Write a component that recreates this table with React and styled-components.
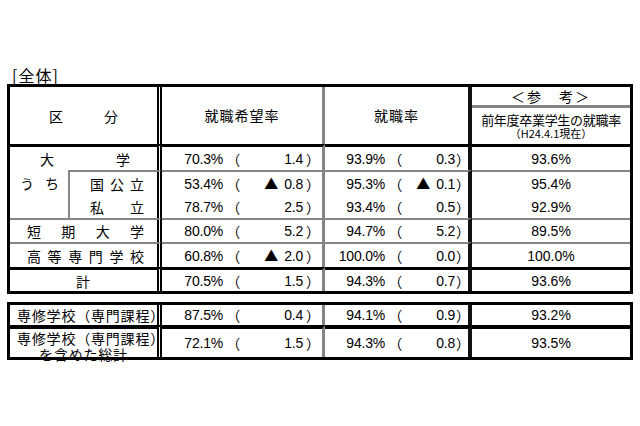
import styled, { createGlobalStyle } from "styled-components";

const GlobalStyle = createGlobalStyle`
  html, body {
    margin: 0;
    padding: 0;
    background: #fff;
  }
  body {
    font-family: "Liberation Sans", "Noto Sans CJK JP", sans-serif;
    color: #000;
  }
  * {
    box-sizing: border-box;
  }
`;

const GRAY = "#858585";

const tops = {
  none: "none",
  gray: `2px solid ${GRAY}`,
  gray3: `3px solid ${GRAY}`,
  black: "3px solid #000",
  heavy: "4px solid #000",
};

const rights = {
  none: "none",
  gray: `2px solid ${GRAY}`,
  gray3: `3px solid ${GRAY}`,
  dbl: "5px double #000",
  black: "4px solid #111",
};

const Page = styled.div`
  width: 640px;
  height: 426px;
  padding: 66px 0 0 7px;
  overflow: hidden;
`;

const Caption = styled.div`
  height: 18px;
  line-height: 18px;
  padding-left: 5px;
  font-family: "Noto Sans CJK JP", sans-serif;
  font-size: 16px;
  letter-spacing: 1px;
`;

const Table = styled.table`
  width: 626px;
  margin-top: ${(p) => p.$mt || 0}px;
  border: 3px solid #000;
  border-collapse: separate;
  border-spacing: 0;
  table-layout: fixed;
`;

const Col = styled.col`
  width: ${(p) => p.$w}px;
`;

const Row = styled.tr`
  height: ${(p) => p.$h}px;
`;

const Cell = styled.td`
  padding: ${(p) => p.$pt || 0}px 0 0;
  border-top: ${(p) => tops[p.$t || "none"]};
  border-right: ${(p) => rights[p.$r || "none"]};
  text-align: center;
  vertical-align: ${(p) => p.$va || "middle"};
  font-size: 14px;
  line-height: 16px;
  white-space: nowrap;
`;

const HeadText = styled.span`
  font-family: "Noto Sans CJK JP", sans-serif;
  font-size: 14px;
  letter-spacing: ${(p) => p.$ls ?? 1}px;
`;

const RefTitle = styled.div`
  font-family: "Noto Sans CJK JP", sans-serif;
  font-size: 14px;
  line-height: 16px;
  letter-spacing: 2px;
`;

const RefSub = styled.div`
  font-family: "Noto Sans CJK JP", sans-serif;
  font-size: ${(p) => p.$fs}px;
  line-height: ${(p) => p.$lh}px;
  letter-spacing: ${(p) => p.$ls}px;
`;

const Spread = styled.div`
  display: flex;
  justify-content: space-between;
  padding: 0 ${(p) => p.$pr}px 0 ${(p) => p.$pl}px;
  font-family: "Noto Sans CJK JP", sans-serif;
  font-size: 14px;
  line-height: 16px;
`;

const Stack = styled.div`
  height: 28px;
  padding-top: 1px;
  overflow: visible;
`;

const Label = styled.div`
  font-family: "Noto Sans CJK JP", sans-serif;
  font-size: 14px;
  line-height: ${(p) => p.$lh || 16}px;
  letter-spacing: 0.8px;
  text-align: ${(p) => p.$align || "left"};
  padding-left: ${(p) => p.$pl || 0}px;
`;

const Val = styled.div`
  display: grid;
  grid-template-columns: ${(p) => p.$cols};
  align-items: center;
  font-size: 14px;
  line-height: 16px;
  letter-spacing: -0.2px;
`;

const Pct = styled.span`
  text-align: right;
`;

const Paren = styled.span`
  font-family: "Noto Sans CJK JP", sans-serif;
  text-align: ${(p) => (p.$open ? "right" : "left")};
  padding-left: ${(p) => p.$pl || 0}px;
`;

const Num = styled.span`
  text-align: right;
`;

const Tri = styled.span`
  font-family: "Noto Sans CJK JP", sans-serif;
  font-size: 14px;
  margin-right: 6px;
`;

const C2 = { cols: "61px 17px 63px 19px", pl: 3 };
const C3 = { cols: "60px 17px 53px 13px", pl: 1 };

const Rate = ({ pct, diff, c }) => {
  const neg = diff.startsWith("▲");
  return (
    <Val $cols={c.cols}>
      <Pct>{pct}%</Pct>
      <Paren $open>（</Paren>
      <Num>
        {neg && <Tri>▲</Tri>}
        {neg ? diff.slice(1) : diff}
      </Num>
      <Paren $pl={c.pl}>）</Paren>
    </Val>
  );
};

const Chars = ({ text, pl, pr }) => (
  <Spread $pl={pl} $pr={pr}>
    {text.split("").map((ch, i) => (
      <span key={i}>{ch}</span>
    ))}
  </Spread>
);

const Values = ({ d, t }) => (
  <>
    <Cell $t={t} $r="gray3">
      <Rate pct={d[0]} diff={d[1]} c={C2} />
    </Cell>
    <Cell $t={t} $r="black">
      <Rate pct={d[2]} diff={d[3]} c={C3} />
    </Cell>
    <Cell $t={t}>{d[4]}%</Cell>
  </>
);

const App = () => (
  <Page>
    <GlobalStyle />
    <Caption>[全体]</Caption>
    <Table>
      <colgroup>
        <Col $w={60} />
        <Col $w={92} />
        <Col $w={163} />
        <Col $w={147} />
        <Col $w={158} />
      </colgroup>
      <tbody>
        <Row $h={18}>
          <Cell rowSpan={2} colSpan={2} $r="dbl">
            <Chars text="区分" pl={39} pr={39} />
          </Cell>
          <Cell rowSpan={2} $r="gray3">
            <HeadText>就職希望率</HeadText>
          </Cell>
          <Cell rowSpan={2} $r="black">
            <HeadText>就職率</HeadText>
          </Cell>
          <Cell>
            <RefTitle>＜参　考＞</RefTitle>
          </Cell>
        </Row>
        <Row $h={39}>
          <Cell $t="gray3">
            <RefSub $fs={13} $lh={15} $ls={-0.3}>前年度卒業学生の就職率</RefSub>
            <RefSub $fs={11} $lh={13} $ls={0}>（H24.4.1現在）</RefSub>
          </Cell>
        </Row>

        <Row $h={26}>
          <Cell colSpan={2} $t="black" $r="dbl">
            <Chars text="大学" pl={30} pr={27} />
          </Cell>
          <Values t="black" d={["70.3", "1.4", "93.9", "0.3", "93.6"]} />
        </Row>
        <Row $h={25}>
          <Cell rowSpan={2} $r="gray" $va="top" $pt={5}>
            <Chars text="うち" pl={10} pr={9} />
          </Cell>
          <Cell $t="gray" $r="dbl">
            <Chars text="国公立" pl={20} pr={13} />
          </Cell>
          <Values t="gray" d={["53.4", "▲0.8", "95.3", "▲0.1", "95.4"]} />
        </Row>
        <Row $h={23}>
          <Cell $r="dbl">
            <Chars text="私立" pl={20} pr={13} />
          </Cell>
          <Values d={["78.7", "2.5", "93.4", "0.5", "92.9"]} />
        </Row>
        <Row $h={24}>
          <Cell colSpan={2} $t="gray" $r="dbl">
            <Chars text="短期大学" pl={17} pr={13} />
          </Cell>
          <Values t="gray" d={["80.0", "5.2", "94.7", "5.2", "89.5"]} />
        </Row>
        <Row $h={25}>
          <Cell colSpan={2} $t="gray" $r="dbl">
            <Chars text="高等専門学校" pl={17} pr={13} />
          </Cell>
          <Values t="gray" d={["60.8", "▲2.0", "100.0", "0.0", "100.0"]} />
        </Row>
        <Row $h={24}>
          <Cell colSpan={2} $t="black" $r="dbl">
            <Label $align="center">計</Label>
          </Cell>
          <Values t="black" d={["70.5", "1.5", "94.3", "0.7", "93.6"]} />
        </Row>
      </tbody>
    </Table>

    <Table $mt={8}>
      <colgroup>
        <Col $w={152} />
        <Col $w={163} />
        <Col $w={147} />
        <Col $w={158} />
      </colgroup>
      <tbody>
        <Row $h={20}>
          <Cell $r="dbl">
            <Label $pl={7}>専修学校（専門課程）</Label>
          </Cell>
          <Values d={["87.5", "0.4", "94.1", "0.9", "93.2"]} />
        </Row>
        <Row $h={32}>
          <Cell $t="heavy" $r="dbl" $va="top">
            <Stack>
              <Label $pl={7} $lh={16}>専修学校（専門課程）</Label>
              <Label $align="center" $lh={16}>を含めた総計</Label>
            </Stack>
          </Cell>
          <Values t="heavy" d={["72.1", "1.5", "94.3", "0.8", "93.5"]} />
        </Row>
      </tbody>
    </Table>
  </Page>
);

export default App;
